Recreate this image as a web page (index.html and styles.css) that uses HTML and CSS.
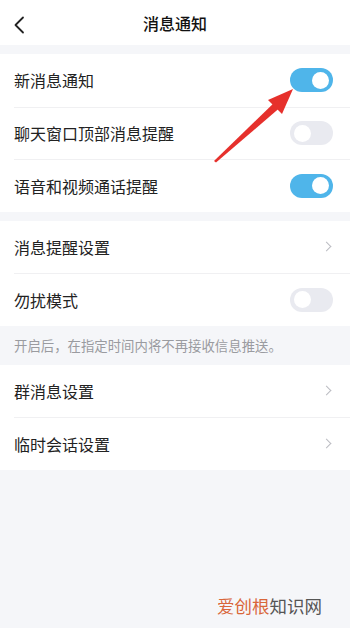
FILE: index.html
```html
<!DOCTYPE html>
<html lang="zh-CN">
<head>
<meta charset="utf-8">
<title>消息通知</title>
<link rel="stylesheet" href="styles.css">
</head>
<body>
<div class="page">
  <header class="header">
    <svg class="back" width="12" height="18" viewBox="0 0 12 18"><path d="M10 1.5 L2.5 9 L10 16.5" fill="none" stroke="#222" stroke-width="1.8" stroke-linecap="round" stroke-linejoin="round"/></svg>
    <h1 class="title">消息通知</h1>
  </header>

  <section class="group first">
    <div class="row"><span class="label">新消息通知</span><span class="toggle on"></span></div>
    <div class="row"><span class="label">聊天窗口顶部消息提醒</span><span class="toggle"></span></div>
    <div class="row"><span class="label">语音和视频通话提醒</span><span class="toggle on"></span></div>
  </section>

  <section class="group">
    <div class="row"><span class="label">消息提醒设置</span><span class="chev"></span></div>
    <div class="row"><span class="label">勿扰模式</span><span class="toggle"></span></div>
  </section>
  <p class="hint">开启后，在指定时间内将不再接收信息推送。</p>

  <section class="group flush">
    <div class="row"><span class="label">群消息设置</span><span class="chev"></span></div>
    <div class="row"><span class="label">临时会话设置</span><span class="chev"></span></div>
  </section>

  <div class="watermark"><span class="wm-a">爱创根</span><span class="wm-b">知识网</span></div>

  <svg class="red-arrow" width="350" height="628" viewBox="0 0 350 628">
    <polygon points="214,161 216,162.5 283,105 278,99" fill="#e6302c"/>
    <polygon points="293,89 268,100 282,114" fill="#e6302c"/>
  </svg>
</div>
</body>
</html>
```
FILE: styles.css
```css
* { box-sizing: border-box; }
html, body { margin: 0; padding: 0; }
body {
  background: #f5f6f9;
  font-family: "Noto Sans CJK SC", "Noto Sans", sans-serif;
  color: #222;
}
.page {
  position: relative;
  width: 350px;
  height: 628px;
  overflow: hidden;
  background: #f5f6f9;
}
.header {
  height: 45px;
  background: #fff;
  display: flex;
  align-items: center;
  justify-content: center;
  position: relative;
}
.back {
  position: absolute;
  left: 13px;
  top: 16px;
}
.title {
  margin: 0;
  font-size: 16px;
  font-weight: 500;
  color: #111;
}
.group {
  background: #fff;
  margin-top: 9px;
}
.group.flush { margin-top: 0; }
.row {
  height: 52.5px;
  margin-left: 14px;
  padding-right: 17px;
  display: flex;
  align-items: center;
  justify-content: space-between;
  border-top: 1px solid #f0f0f2;
}
.row:first-child { border-top: none; }
.label {
  font-size: 16px;
  color: #222;
}
.toggle {
  width: 43px;
  height: 24px;
  border-radius: 12px;
  background: #e9eaf0;
  position: relative;
}
.toggle::after {
  content: "";
  position: absolute;
  top: 3.5px;
  left: 4px;
  width: 17px;
  height: 17px;
  border-radius: 50%;
  background: #fff;
}
.toggle.on { background: #4fb5ea; }
.toggle.on::after { left: auto; right: 4px; }
.chev {
  width: 7px;
  height: 7px;
  border-top: 1.3px solid #bbbcc2;
  border-right: 1.3px solid #bbbcc2;
  transform: rotate(45deg);
  margin-right: 3px;
}
.hint {
  margin: 0;
  height: 39px;
  padding-left: 14px;
  display: flex;
  align-items: center;
  font-size: 13.4px;
  color: #9a9ba0;
}
.watermark {
  position: absolute;
  left: 217px;
  top: 594px;
  font-size: 17.5px;
  line-height: 24px;
}
.wm-a { color: #d9663a; }
.wm-b { color: #555; }
.red-arrow {
  position: absolute;
  left: 0;
  top: 0;
  pointer-events: none;
}
```
